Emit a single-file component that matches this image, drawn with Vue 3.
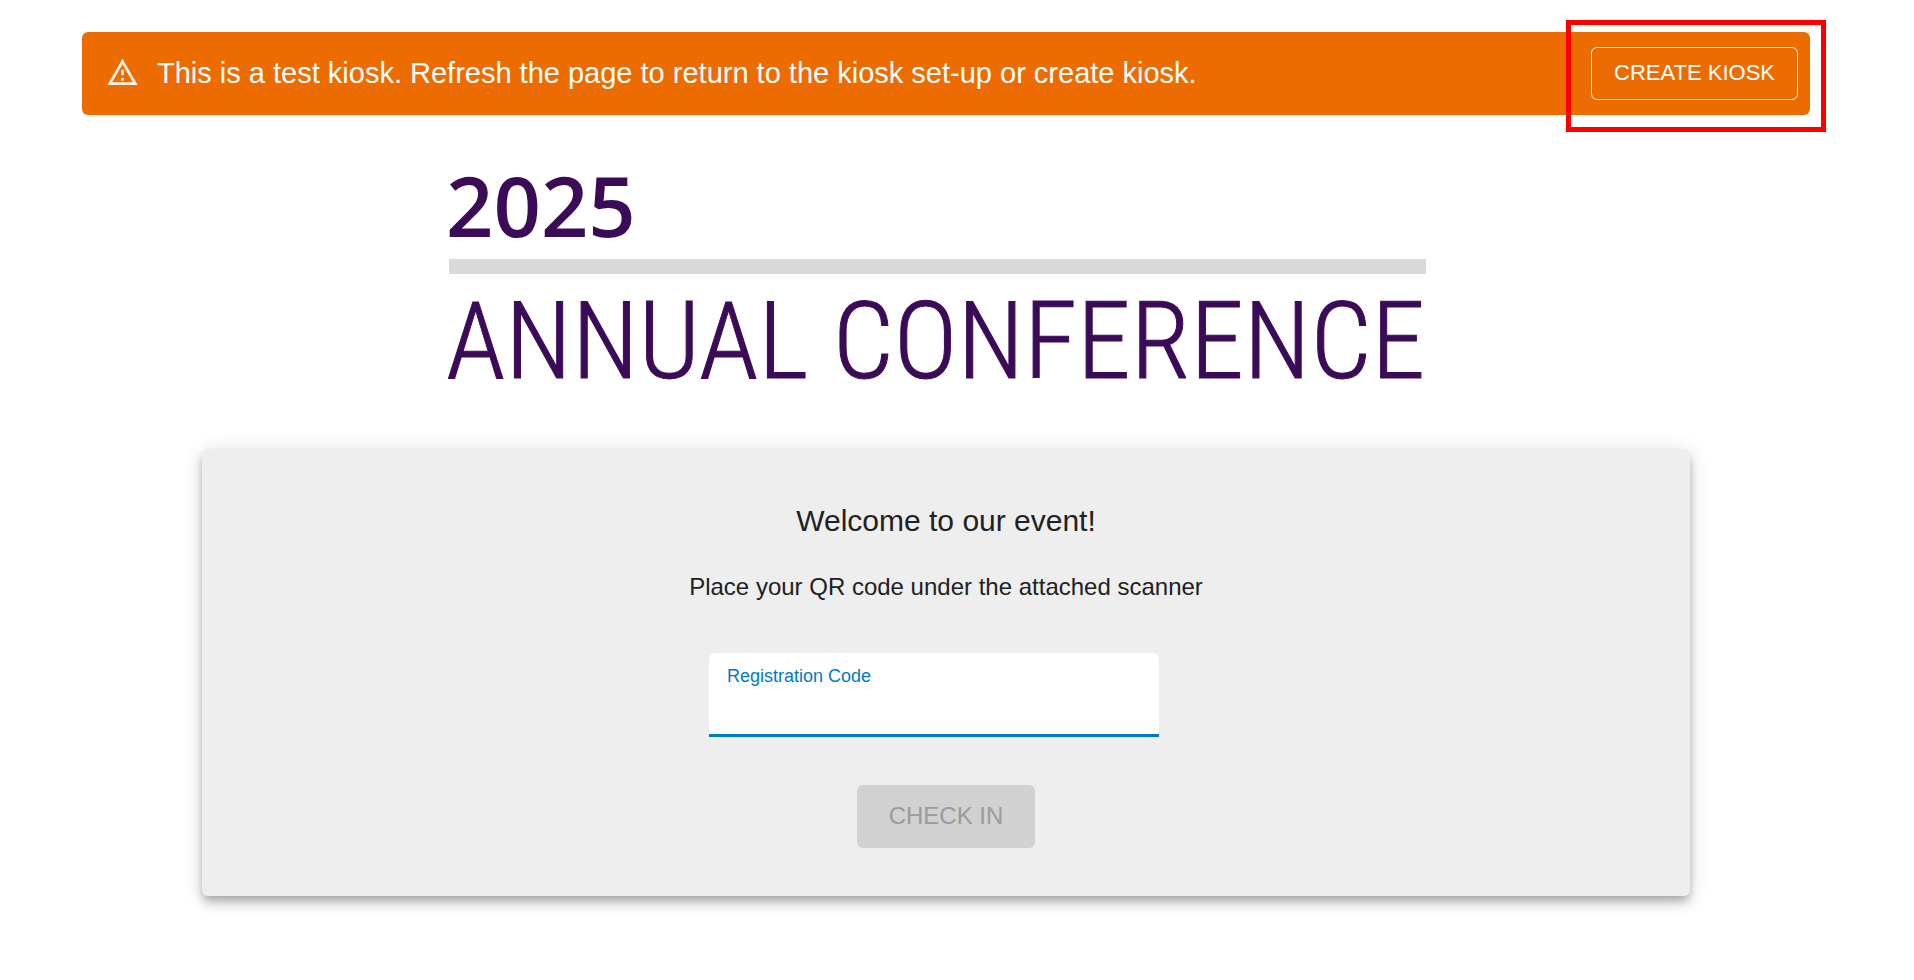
<script setup>
import { ref } from 'vue'

const code = ref('')
</script>

<template>
  <main class="kiosk">
    <section class="banner" role="alert">
      <svg class="warning" viewBox="0 0 24 24" aria-hidden="true">
        <path d="M12 5.99L19.53 19H4.47L12 5.99M12 2L1 21h22L12 2zm1 14h-2v2h2v-2zm0-6h-2v4h2v-4z" />
      </svg>
      <p class="message">This is a test kiosk. Refresh the page to return to the kiosk set-up or create kiosk.</p>
      <button class="create" type="button">CREATE KIOSK</button>
      <span class="highlight" aria-hidden="true"></span>
    </section>

    <header class="logo">
      <h1>
        <span class="year">2025</span>
        <span class="rule"></span>
        <span class="name">ANNUAL CONFERENCE</span>
      </h1>
    </header>

    <form class="card" @submit.prevent>
      <h2>Welcome to our event!</h2>
      <p class="hint">Place your QR code under the attached scanner</p>
      <div class="field">
        <label for="code">Registration Code</label>
        <input id="code" v-model="code" type="text" autocomplete="off" />
      </div>
      <button class="checkin" type="submit" disabled>CHECK IN</button>
    </form>
  </main>
</template>

<style>
body {
  margin: 0;
  background: #fff;
}
</style>

<style scoped>
.kiosk {
  padding: 32px 104px 64px 82px;
  font-family: "Liberation Sans", Arial, sans-serif;
  color: #212121;
}

h1,
h2,
p {
  margin: 0;
  font-weight: 400;
}

button,
input {
  font-family: inherit;
}

.banner {
  position: relative;
  display: flex;
  align-items: center;
  box-sizing: border-box;
  min-height: 83px;
  padding: 15px 12px 15px 24px;
  border-radius: 6px;
  background: #ed6c02;
  color: #fff;
}

.warning {
  flex: none;
  width: 33px;
  height: 33px;
  margin-right: 18px;
  padding-bottom: 2px;
  fill: #fff;
  opacity: 0.9;
}

.message {
  flex: 1;
  padding-bottom: 2px;
  font-size: 29px;
  line-height: 40px;
}

.create {
  flex: none;
  box-sizing: border-box;
  height: 53px;
  padding: 0 22px 2px;
  border: 1px solid #fff;
  border-radius: 6px;
  background: transparent;
  color: #fff;
  font-size: 22px;
}

.highlight {
  position: absolute;
  top: -12px;
  right: -16px;
  box-sizing: border-box;
  width: 260px;
  height: 112px;
  border: 5px solid #f00;
  pointer-events: none;
}

.logo {
  display: flex;
  justify-content: center;
  padding: 46px 17px 48px 0;
}

.logo h1 {
  display: flex;
  flex-direction: column;
  width: 977px;
  color: #3b0b57;
  text-indent: -3px;
}

.year {
  font-family: "Open Sans", sans-serif;
  font-size: 83px;
  font-weight: 600;
  line-height: 88px;
}

.rule {
  height: 15px;
  margin-top: 10px;
  background: #d9d9d9;
}

.name {
  margin-top: 8px;
  font-family: "Roboto Condensed", "Roboto", sans-serif;
  font-size: 108px;
  font-weight: 300;
  line-height: 119px;
  white-space: nowrap;
  -webkit-text-stroke: 1px #3b0b57;
}

.card {
  display: flex;
  flex-direction: column;
  align-items: center;
  margin: 0 120px;
  padding: 52px 24px 48px;
  border-radius: 6px;
  background: #eee;
  box-shadow:
    0 5px 8px -2px rgba(0, 0, 0, 0.2),
    0 8px 12px 0 rgba(0, 0, 0, 0.14),
    0 2px 21px 0 rgba(0, 0, 0, 0.12);
}

h2 {
  font-size: 30px;
  line-height: 40px;
}

.hint {
  margin-top: 28px;
  font-size: 24px;
  line-height: 36px;
}

.field {
  display: flex;
  flex-direction: column;
  box-sizing: border-box;
  width: 450px;
  height: 84px;
  margin: 48px 24px 48px 0;
  padding: 12px 18px 0;
  border-bottom: 3px solid #007bc3;
  border-radius: 6px 6px 0 0;
  background: #fff;
}

.field label {
  color: #007bc3;
  font-size: 18px;
  line-height: 22px;
}

.field input {
  height: 36px;
  padding: 0;
  border: 0;
  outline: 0;
  background: transparent;
  font-size: 24px;
}

.checkin {
  height: 63px;
  padding: 0 32px 2px;
  border: 0;
  border-radius: 6px;
  background: #d1d1d1;
  color: #9b9b9b;
  font-size: 24px;
}
</style>
